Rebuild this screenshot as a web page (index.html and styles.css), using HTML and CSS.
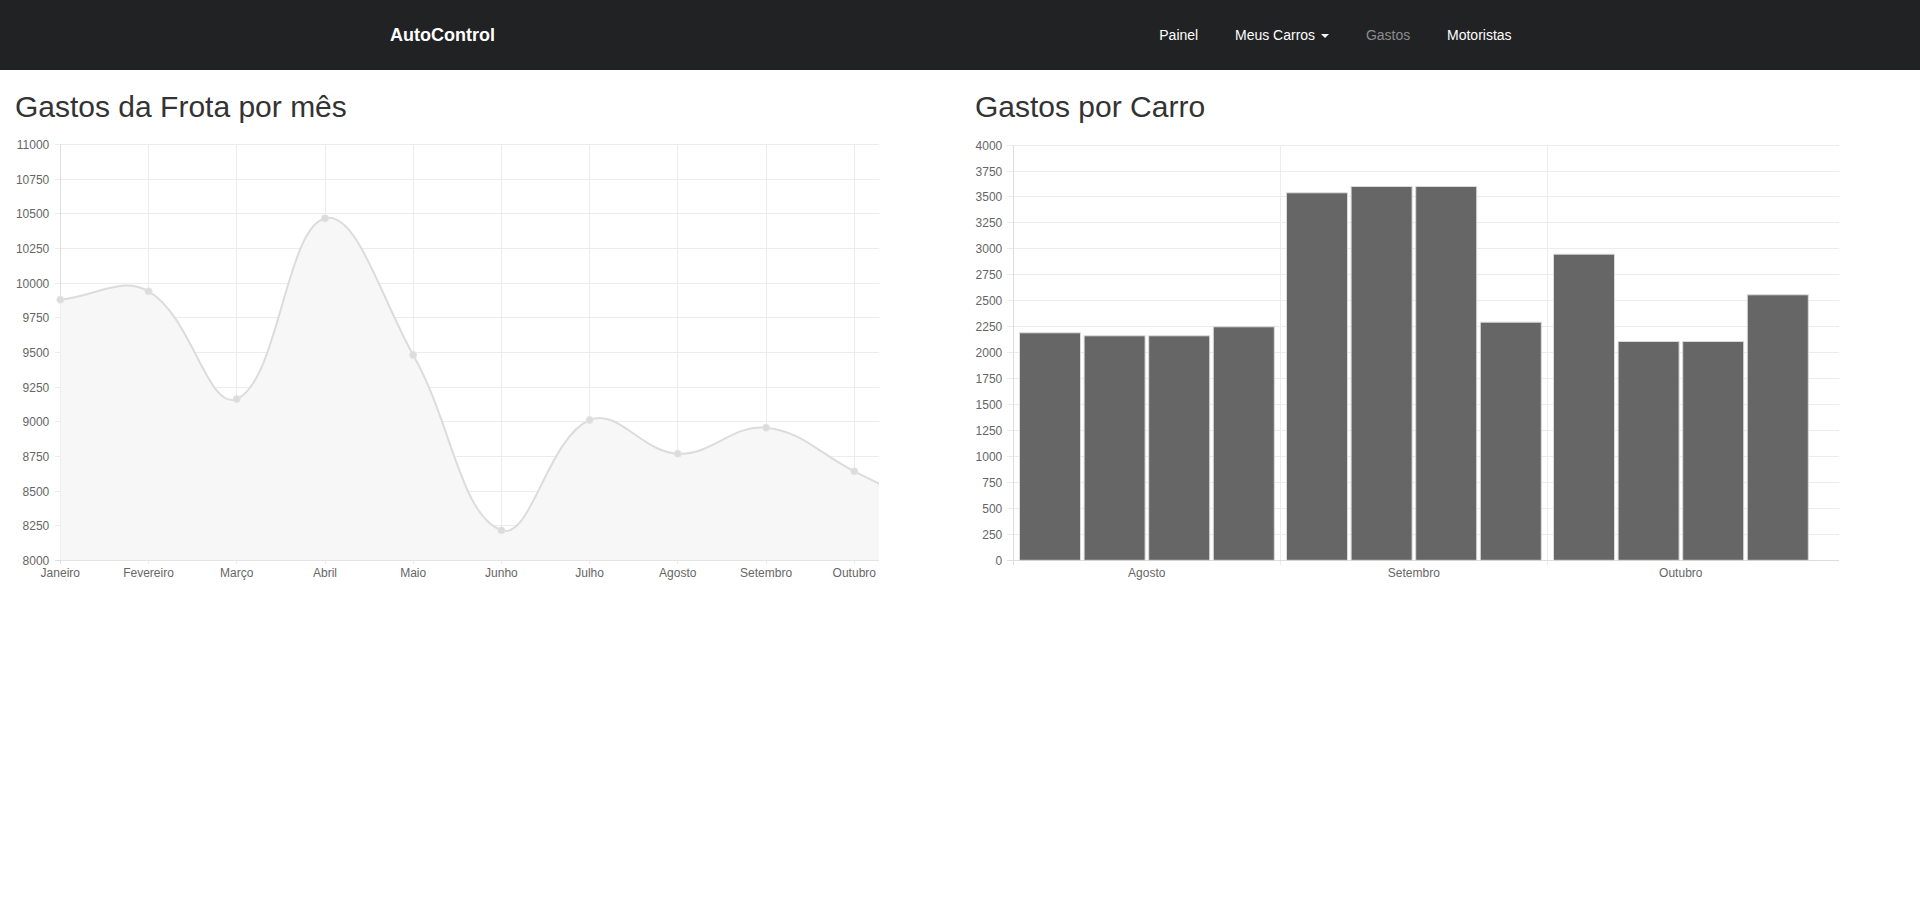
FILE: index.html
```html
<!DOCTYPE html>
<html lang="pt-BR">
<head>
<meta charset="utf-8">
<title>AutoControl - Gastos</title>
<link rel="stylesheet" href="styles.css">
</head>
<body>
<nav class="navbar">
  <div class="nav-inner">
    <a class="brand" href="#">AutoControl</a>
    <ul class="nav-links">
      <li><a href="#">Painel</a></li>
      <li><a href="#">Meus Carros<span class="caret"></span></a></li>
      <li><a href="#" class="active">Gastos</a></li>
      <li><a href="#">Motoristas</a></li>
    </ul>
  </div>
</nav>

<main class="row">
  <section class="col">
    <h2>Gastos da Frota por mês</h2>
    <svg class="chart" width="864" height="460" viewBox="0 0 864 460">
      <g class="grid">
        <line x1="40" x2="864" y1="13.5" y2="13.5"/>
        <line x1="40" x2="864" y1="48.5" y2="48.5"/>
        <line x1="40" x2="864" y1="82.5" y2="82.5"/>
        <line x1="40" x2="864" y1="117.5" y2="117.5"/>
        <line x1="40" x2="864" y1="152.5" y2="152.5"/>
        <line x1="40" x2="864" y1="186.5" y2="186.5"/>
        <line x1="40" x2="864" y1="221.5" y2="221.5"/>
        <line x1="40" x2="864" y1="256.5" y2="256.5"/>
        <line x1="40" x2="864" y1="290.5" y2="290.5"/>
        <line x1="40" x2="864" y1="325.5" y2="325.5"/>
        <line x1="40" x2="864" y1="360.5" y2="360.5"/>
        <line x1="40" x2="864" y1="394.5" y2="394.5"/>
        <line x1="133.5" x2="133.5" y1="13.5" y2="433"/>
        <line x1="221.5" x2="221.5" y1="13.5" y2="433"/>
        <line x1="310.5" x2="310.5" y1="13.5" y2="433"/>
        <line x1="398.5" x2="398.5" y1="13.5" y2="433"/>
        <line x1="486.5" x2="486.5" y1="13.5" y2="433"/>
        <line x1="574.5" x2="574.5" y1="13.5" y2="433"/>
        <line x1="662.5" x2="662.5" y1="13.5" y2="433"/>
        <line x1="751.5" x2="751.5" y1="13.5" y2="433"/>
        <line x1="839.5" x2="839.5" y1="13.5" y2="433"/>
      </g>
      <g class="axis">
        <line x1="45.5" x2="45.5" y1="13.5" y2="433"/>
        <line x1="40" x2="864" y1="429.5" y2="429.5"/>
      </g>
      <path id="trend-area" class="area" d="M45.3 168.7 L133.5 160.3 L221.7 268 L310 87.3 L398.2 224 L486.4 399.3 L574.6 289 L662.8 322.7 L751.1 296.7 L839.3 340.3 L927.5 384 L927.5 429.3 L45.3 429.3 Z"/>
      <path id="trend-line" class="line" d="M45.3 168.7 L133.5 160.3 L221.7 268 L310 87.3 L398.2 224 L486.4 399.3 L574.6 289 L662.8 322.7 L751.1 296.7 L839.3 340.3 L927.5 384"/>
      <g class="points">
        <circle cx="45.3" cy="168.7" r="3.5"/>
        <circle cx="133.5" cy="160.3" r="3.5"/>
        <circle cx="221.7" cy="268" r="3.5"/>
        <circle cx="310" cy="87.3" r="3.5"/>
        <circle cx="398.2" cy="224" r="3.5"/>
        <circle cx="486.4" cy="399.3" r="3.5"/>
        <circle cx="574.6" cy="289" r="3.5"/>
        <circle cx="662.8" cy="322.7" r="3.5"/>
        <circle cx="751.1" cy="296.7" r="3.5"/>
        <circle cx="839.3" cy="340.3" r="3.5"/>
      </g>
      <g class="tick tick-y">
        <text x="34.3" y="17.5">11000</text>
        <text x="34.3" y="52.5">10750</text>
        <text x="34.3" y="86.5">10500</text>
        <text x="34.3" y="121.5">10250</text>
        <text x="34.3" y="156.5">10000</text>
        <text x="34.3" y="190.5">9750</text>
        <text x="34.3" y="225.5">9500</text>
        <text x="34.3" y="260.5">9250</text>
        <text x="34.3" y="294.5">9000</text>
        <text x="34.3" y="329.5">8750</text>
        <text x="34.3" y="364.5">8500</text>
        <text x="34.3" y="398.5">8250</text>
        <text x="34.3" y="433.5">8000</text>
      </g>
      <g class="tick tick-x">
        <text x="45.3" y="446">Janeiro</text>
        <text x="133.5" y="446">Fevereiro</text>
        <text x="221.7" y="446">Março</text>
        <text x="310" y="446">Abril</text>
        <text x="398.2" y="446">Maio</text>
        <text x="486.4" y="446">Junho</text>
        <text x="574.6" y="446">Julho</text>
        <text x="662.8" y="446">Agosto</text>
        <text x="751.1" y="446">Setembro</text>
        <text x="839.3" y="446">Outubro</text>
      </g>
    </svg>
  </section>

  <section class="col">
    <h2>Gastos por Carro</h2>
    <svg class="chart" width="864" height="460" viewBox="0 0 864 460">
      <g class="grid">
        <line x1="32" x2="864" y1="14.5" y2="14.5"/>
        <line x1="32" x2="864" y1="40.5" y2="40.5"/>
        <line x1="32" x2="864" y1="65.5" y2="65.5"/>
        <line x1="32" x2="864" y1="91.5" y2="91.5"/>
        <line x1="32" x2="864" y1="117.5" y2="117.5"/>
        <line x1="32" x2="864" y1="143.5" y2="143.5"/>
        <line x1="32" x2="864" y1="169.5" y2="169.5"/>
        <line x1="32" x2="864" y1="195.5" y2="195.5"/>
        <line x1="32" x2="864" y1="221.5" y2="221.5"/>
        <line x1="32" x2="864" y1="247.5" y2="247.5"/>
        <line x1="32" x2="864" y1="273.5" y2="273.5"/>
        <line x1="32" x2="864" y1="299.5" y2="299.5"/>
        <line x1="32" x2="864" y1="325.5" y2="325.5"/>
        <line x1="32" x2="864" y1="351.5" y2="351.5"/>
        <line x1="32" x2="864" y1="377.5" y2="377.5"/>
        <line x1="32" x2="864" y1="403.5" y2="403.5"/>
        <line x1="305.5" x2="305.5" y1="14.5" y2="434"/>
        <line x1="572.5" x2="572.5" y1="14.5" y2="434"/>
      </g>
      <g class="axis">
        <line x1="38.5" x2="38.5" y1="14.5" y2="434"/>
        <line x1="32" x2="864" y1="429.5" y2="429.5"/>
      </g>
      <g class="bars">
        <rect x="44.5" y="201.8" width="61" height="227.5"/>
        <rect x="109.1" y="204.8" width="61" height="224.5"/>
        <rect x="173.7" y="204.8" width="61" height="224.5"/>
        <rect x="238.3" y="195.8" width="61" height="233.5"/>
        <rect x="311.5" y="61.8" width="61" height="367.5"/>
        <rect x="376.1" y="55.5" width="61" height="373.8"/>
        <rect x="440.7" y="55.5" width="61" height="373.8"/>
        <rect x="505.3" y="191.2" width="61" height="238.1"/>
        <rect x="578.5" y="123.2" width="61" height="306.1"/>
        <rect x="643.1" y="210.5" width="61" height="218.8"/>
        <rect x="707.7" y="210.5" width="61" height="218.8"/>
        <rect x="772.3" y="163.8" width="61" height="265.5"/>
      </g>
      <g class="tick tick-y">
        <text x="27.3" y="18.5">4000</text>
        <text x="27.3" y="44.5">3750</text>
        <text x="27.3" y="69.5">3500</text>
        <text x="27.3" y="95.5">3250</text>
        <text x="27.3" y="121.5">3000</text>
        <text x="27.3" y="147.5">2750</text>
        <text x="27.3" y="173.5">2500</text>
        <text x="27.3" y="199.5">2250</text>
        <text x="27.3" y="225.5">2000</text>
        <text x="27.3" y="251.5">1750</text>
        <text x="27.3" y="277.5">1500</text>
        <text x="27.3" y="303.5">1250</text>
        <text x="27.3" y="329.5">1000</text>
        <text x="27.3" y="355.5">750</text>
        <text x="27.3" y="381.5">500</text>
        <text x="27.3" y="407.5">250</text>
        <text x="27.3" y="433.5">0</text>
      </g>
      <g class="tick tick-x">
        <text x="171.8" y="446">Agosto</text>
        <text x="438.8" y="446">Setembro</text>
        <text x="705.8" y="446">Outubro</text>
      </g>
    </svg>
  </section>
</main>
<script src="charts.js"></script>
</body>
</html>
```

FILE: styles.css
```css
* {
  box-sizing: border-box;
}

html, body {
  margin: 0;
  padding: 0;
  background: #fff;
}

body {
  font-family: "Liberation Sans", Arial, Helvetica, sans-serif;
  font-size: 14px;
  line-height: 20px;
  color: #333;
}

.navbar {
  height: 70px;
  background: #212224;
}

.nav-inner {
  width: 1170px;
  height: 100%;
  margin: 0 auto;
  padding: 0 15px;
  display: flex;
  align-items: center;
  justify-content: space-between;
}

.brand {
  font-size: 18px;
  font-weight: bold;
  line-height: 20px;
  color: #fff;
  text-decoration: none;
}

.nav-links {
  display: flex;
  margin: 0;
  padding: 0;
  list-style: none;
}

.nav-links a {
  display: flex;
  align-items: center;
  padding: 0 18.4px;
  font-size: 14px;
  line-height: 20px;
  color: #fff;
  text-decoration: none;
}

.nav-links a.active {
  color: #8c8c8c;
}

.caret {
  display: inline-block;
  width: 0;
  height: 0;
  margin-left: 6px;
  margin-top: 1px;
  border-top: 4px solid #fff;
  border-left: 4px solid transparent;
  border-right: 4px solid transparent;
}

.row {
  display: flex;
}

.col {
  width: 50%;
  padding: 0 15px;
}

.col h2 {
  margin: 20px 0 8px;
  font-size: 30px;
  line-height: 33px;
  font-weight: 500;
  color: #333;
}

.chart {
  display: block;
  overflow: hidden;
}

.grid line {
  stroke: #ececec;
  stroke-width: 1;
}

.axis line {
  stroke: #dedede;
  stroke-width: 1;
}

.area {
  fill: #f7f7f7;
  stroke: none;
}

.line {
  fill: none;
  stroke: #dcdcdc;
  stroke-width: 2;
}

.points circle {
  fill: #dcdcdc;
  stroke: #e4e4e4;
  stroke-width: 1;
}

.bars rect {
  fill: #666;
  stroke: #dadada;
  stroke-width: 1;
}

.tick text {
  font-family: "Liberation Sans", Arial, Helvetica, sans-serif;
  font-size: 12px;
  fill: #666;
}

.tick-y text {
  text-anchor: end;
}

.tick-x text {
  text-anchor: middle;
}
```

FILE: charts.js
```js
(function () {
  var pts = [
    [45.3, 168.7], [133.5, 160.3], [221.7, 268], [310, 87.3], [398.2, 224],
    [486.4, 399.3], [574.6, 289], [662.8, 322.7], [751.1, 296.7], [839.3, 340.3],
    [927.5, 384]
  ];
  var tension = 0.4, top = 13.3, bottom = 429.3;
  function clamp(v) { return Math.max(top, Math.min(bottom, v)); }
  var cp = pts.map(function (c, i) {
    var p = pts[i - 1] || c, n = pts[i + 1] || c;
    var d01 = Math.hypot(c[0] - p[0], c[1] - p[1]);
    var d12 = Math.hypot(n[0] - c[0], n[1] - c[1]);
    var s01 = d01 / (d01 + d12) || 0, s12 = d12 / (d01 + d12) || 0;
    var fa = tension * s01, fb = tension * s12;
    return {
      px: c[0] - fa * (n[0] - p[0]), py: clamp(c[1] - fa * (n[1] - p[1])),
      nx: c[0] + fb * (n[0] - p[0]), ny: clamp(c[1] + fb * (n[1] - p[1]))
    };
  });
  var d = 'M' + pts[0][0] + ' ' + pts[0][1];
  for (var i = 1; i < pts.length; i++) {
    d += ' C' + cp[i - 1].nx.toFixed(2) + ' ' + cp[i - 1].ny.toFixed(2) + ' ' +
      cp[i].px.toFixed(2) + ' ' + cp[i].py.toFixed(2) + ' ' + pts[i][0] + ' ' + pts[i][1];
  }
  var last = pts[pts.length - 1];
  document.getElementById('trend-line').setAttribute('d', d);
  document.getElementById('trend-area').setAttribute('d',
    d + ' L' + last[0] + ' ' + bottom + ' L' + pts[0][0] + ' ' + bottom + ' Z');
})();
```
